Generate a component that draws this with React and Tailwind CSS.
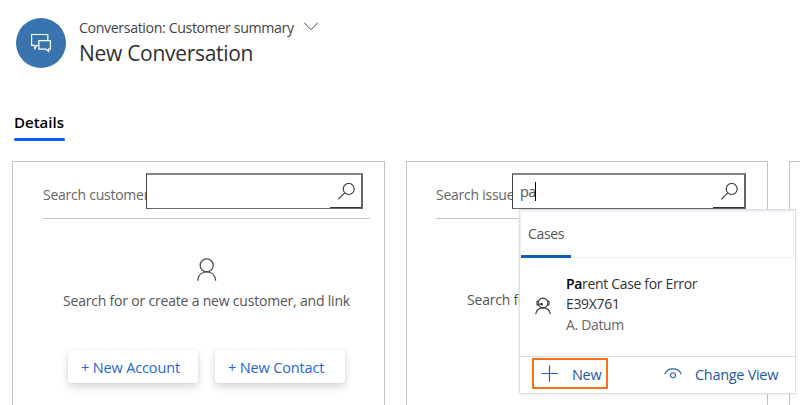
import React from "react";

function ChatIcon() {
  return (
    <svg className="h-[50px] w-[50px]" viewBox="0 0 50 50" fill="none" stroke="#fff" strokeWidth="1.2">
      <path d="M22.5 27.400H20.700L18.700 31.200V27.400H15.600V16.500H31.800V22" />
      <path d="M22.900 22.600H34.400V31.200H32.600V33.400L30 31.200H22.900Z" />
    </svg>
  );
}

function SearchIcon() {
  return (
    <svg className="h-[18px] w-[18px]" viewBox="0 0 18 18" fill="none" stroke="#3f3f3f" strokeWidth="1.2">
      <circle cx="11.700" cy="6" r="5.500" />
      <path d="M7.700 9.900 1.200 16.400" />
    </svg>
  );
}

function PersonIcon() {
  return (
    <svg className="h-[24px] w-[20px]" viewBox="0 0 20 24" fill="none" stroke="#505050" strokeWidth="1.3">
      <circle cx="9.700" cy="7.400" r="6.500" />
      <path d="M.7 22.800C1.100 17.400 4.700 13.900 9.700 13.900s8.600 3.500 9 8.900" />
    </svg>
  );
}

function AgentIcon() {
  return (
    <svg className="h-[18px] w-[16px]" viewBox="0 0 16 18" fill="none" stroke="#333" strokeWidth="1.1">
      <circle cx="8" cy="6" r="4.900" />
      <path d="M3.300 3.800 2 4.300V7.800L3.300 8.300M12.700 3.800 14 4.300V7.800L12.700 8.300M3.300 6.800C4.500 7.400 6 7.200 7.300 6.200" />
      <path d="M.7 17.200C1.300 13.400 4 10.900 8 10.900s6.700 2.500 7.300 6.300" />
      <circle cx="6.800" cy="7.400" r=".6" fill="#333" />
    </svg>
  );
}

function EyeIcon() {
  return (
    <svg className="h-[12px] w-[18px]" viewBox="0 0 18 12" fill="none" stroke="#2a5db5" strokeWidth="1.1">
      <path d="M.7 6.300C2 2.800 5 .9 9 .9s7 1.900 8.300 5.400" />
      <circle cx="9" cy="7.300" r="2.500" />
    </svg>
  );
}

function SearchBox({ value, className }) {
  return (
    <div className={`flex h-[36px] shrink-0 justify-between border border-t-2 border-r-2 border-[#444] border-t-[#858585] border-r-[#666] border-b-[#666] bg-white ${className}`}>
      <div className="flex items-center pl-[7px]">
        <span className="text-[14.5px] leading-5 tracking-[-0.6px] whitespace-pre text-[#555]">{value}</span>
        {value && <span className="-ml-px h-[19px] w-px bg-black" />}
      </div>
      <div className="flex w-[31px] justify-center border-b border-[#333] pt-2">
        <SearchIcon />
      </div>
    </div>
  );
}

function LinkButton({ children }) {
  return (
    <button className="h-[33px] w-[130px] rounded-[3px] bg-white pt-[2px] pl-[13px] text-left text-[14.5px] leading-5 tracking-[-0.15px] whitespace-nowrap text-[#2764e0] shadow-[0_4px_8px_rgba(0,0,0,0.16),0_0_2px_rgba(0,0,0,0.1)]">
      {children}
    </button>
  );
}

function Dropdown() {
  return (
    <div className="absolute top-[47px] left-[112px] z-10 flex h-[185px] w-[277px] flex-col border border-[#dedede] bg-white shadow-[0_2px_4px_rgba(0,0,0,0.06)]">
      <div className="mr-px flex h-[48px] shrink-0 border border-t-2 border-[#eaf1f8]">
        <div className="flex h-[46px] w-[50px] shrink-0 items-center border-b-[3px] border-[#0f5fbe] pl-[7px] text-[14px] leading-5 tracking-[-0.35px] text-[#555]">
          Cases
        </div>
      </div>
      <div className="flex h-[98px] shrink-0 pt-[16px] pl-[15px]">
        <div className="w-[31px] pt-[23px]">
          <AgentIcon />
        </div>
        <div className="text-[14px] leading-[20.300px] tracking-[-0.33px] whitespace-nowrap text-[#333]">
          <div><span className="font-semibold text-black">Pa</span>rent Case for Error</div>
          <div>E39X761</div>
          <div className="text-[#666]">A. Datum</div>
        </div>
      </div>
      <div className="flex h-[37px] border-t border-[#dedede] pt-px pl-3 text-[14.5px] leading-5 tracking-[-0.3px] text-[#1f56ad]">
        <div className="flex h-[31px] w-[76px] shrink-0 items-center gap-[13px] border-2 border-[#f97316] pl-[7px]">
          <svg className="h-[18px] w-[18px] shrink-0" viewBox="0 0 18 18" stroke="#2a5db5" strokeWidth="1.2">
            <path d="M8.500 .5V17M.5 8.500H17" />
          </svg>
          <span className="pt-[3px]">New</span>
        </div>
        <div className="ml-[56px] flex h-[31px] items-center gap-[13px] whitespace-nowrap">
          <EyeIcon />
          <span className="pt-[3px]">Change View</span>
        </div>
      </div>
    </div>
  );
}

export default function App() {
  return (
    <div className="flex h-[405px] w-[800px] flex-col overflow-hidden bg-white font-['Open_Sans','Noto_Sans',sans-serif]">
      <header className="flex h-[86px] shrink-0 gap-[13px] pt-[18px] pl-4">
        <div className="h-[50px] w-[50px] rounded-full bg-[#3a74ae]">
          <ChatIcon />
        </div>
        <div className="whitespace-nowrap">
          <div className="flex items-center gap-[10px]">
            <span className="w-[215px] text-[14.2px] leading-5 tracking-[-0.38px] text-[#444]">Conversation: Customer summary</span>
            <svg className="-mt-[3px] h-[9px] w-[15px]" viewBox="0 0 15 9" fill="none" stroke="#444" strokeWidth="1">
              <path d="M.2 .8 7 7.700 13.800 .8" />
            </svg>
          </div>
          <h1 className="-mt-px text-[21px] leading-8 tracking-[-0.3px] text-[#2f2f2f]">New Conversation</h1>
        </div>
      </header>
      <nav className="flex h-[75px] shrink-0 pt-[26px] pl-[14px]">
        <div className="flex h-[29px] w-[50px] flex-col justify-between whitespace-nowrap">
          <span className="text-[15px] leading-5 font-semibold text-black">Details</span>
          <div className="h-[3px] w-[51px] rounded-sm bg-[#0a5cff]" />
        </div>
      </nav>
      <main className="flex h-[244px] shrink-0 gap-[21px] pl-3">
        <section className="h-[260px] w-[373px] shrink-0 border border-[#c4c4c4] pt-[11px]">
          <div className="mr-[14px] ml-[30px] flex h-[46px] border-b border-[#c4c4c4]">
            <div className="w-[103px] shrink-0 pt-[12px] text-[14px] leading-5 tracking-[-0.25px] whitespace-nowrap text-[#666]">Search customer</div>
            <SearchBox value="" className="w-[217px]" />
          </div>
          <div className="flex flex-col items-center pt-[39px] pl-4">
            <PersonIcon />
            <p className="mt-[9px] text-[14px] leading-5 tracking-[-0.2px] whitespace-nowrap text-[#555]">Search for or create a new customer, and link</p>
            <div className="mt-[39px] flex gap-[17px]">
              <LinkButton>+ New Account</LinkButton>
              <LinkButton>+ New Contact</LinkButton>
            </div>
          </div>
        </section>
        <section className="relative h-[260px] w-[362px] shrink-0 border border-[#c4c4c4] pt-[11px]">
          <div className="mr-[14px] ml-[29px] flex h-[46px] border-b border-[#c4c4c4]">
            <div className="w-[76px] shrink-0 pt-[12px] text-[14px] leading-5 tracking-[-0.25px] whitespace-nowrap text-[#666]">Search issue</div>
            <SearchBox value="pa" className="w-[234px]" />
          </div>
          <p className="pt-[71px] pl-[60px] text-[14px] leading-5 tracking-[-0.2px] whitespace-nowrap text-[#555]">Search for</p>
          <Dropdown />
        </section>
        <section className="h-[260px] w-[373px] shrink-0 border border-[#c4c4c4]" />
      </main>
    </div>
  );
}
